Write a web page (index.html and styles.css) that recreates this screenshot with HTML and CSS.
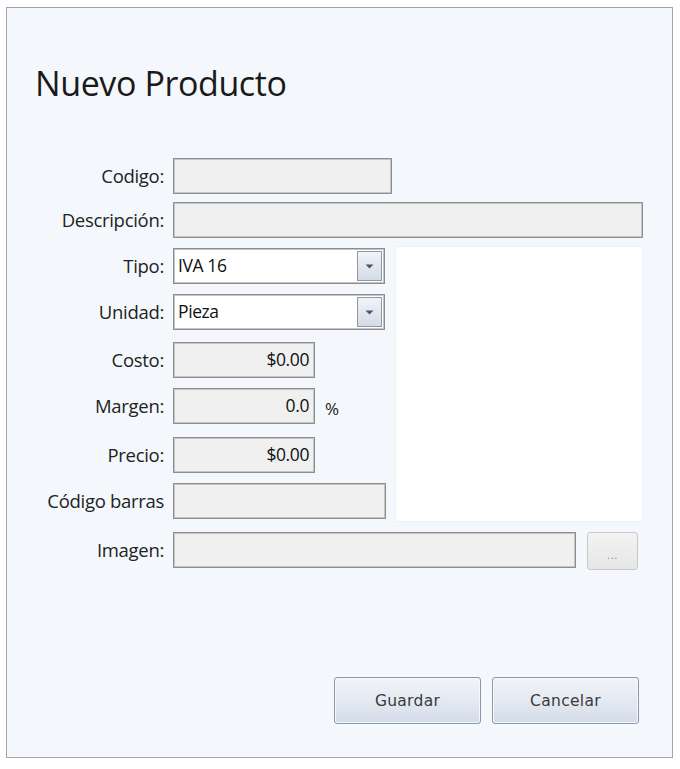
FILE: index.html
```html
<!DOCTYPE html>
<html lang="es">
<head>
<meta charset="utf-8">
<title>Nuevo Producto</title>
<link rel="stylesheet" href="styles.css">
</head>
<body>
<div class="dialog">
  <h1 class="title">Nuevo Producto</h1>
  <div class="form">
    <label class="lbl">Codigo:</label>
    <div class="field w-codigo"></div>

    <label class="lbl">Descripción:</label>
    <div class="field span-all"></div>

    <label class="lbl">Tipo:</label>
    <div class="select">
      <span class="select-text">IVA 16</span>
      <span class="drop"><svg width="9" height="5" viewBox="0 0 9 5"><path d="M0.5 0.5 H8.5 L4.5 4.5 Z" fill="#4a5566"/></svg></span>
    </div>
    <div class="panel"></div>

    <label class="lbl">Unidad:</label>
    <div class="select">
      <span class="select-text">Pieza</span>
      <span class="drop"><svg width="9" height="5" viewBox="0 0 9 5"><path d="M0.5 0.5 H8.5 L4.5 4.5 Z" fill="#4a5566"/></svg></span>
    </div>

    <label class="lbl">Costo:</label>
    <div class="field w-num num">$0.00</div>

    <label class="lbl">Margen:</label>
    <div class="num-row">
      <div class="field w-num num">0.0</div>
      <span class="pct">%</span>
    </div>

    <label class="lbl">Precio:</label>
    <div class="field w-num num">$0.00</div>

    <label class="lbl">Código barras</label>
    <div class="field w-barras"></div>

    <label class="lbl">Imagen:</label>
    <div class="img-row">
      <div class="field w-imagen"></div>
      <button class="dots-btn" type="button">...</button>
    </div>
  </div>
  <div class="actions">
    <button class="btn" type="button">Guardar</button>
    <button class="btn" type="button">Cancelar</button>
  </div>
</div>
</body>
</html>
```

FILE: styles.css
```css
html, body {
  margin: 0;
  padding: 0;
  background: #ffffff;
}

body {
  font-family: "Open Sans", "Noto Sans", "Liberation Sans", sans-serif;
  color: #1e1e1e;
}

.dialog {
  box-sizing: border-box;
  margin: 7px 0 0 6px;
  width: 667px;
  height: 751px;
  border: 1px solid #a2a4a6;
  background: #f4f8fc;
  padding: 0 23px 33px 23px;
  display: flex;
  flex-direction: column;
}

.title {
  margin: 58px 0 0 0;
  padding-left: 5px;
  font-size: 34px;
  line-height: 34px;
  font-weight: 400;
  color: #1a1a1a;
  letter-spacing: -0.4px;
}

.form {
  margin-top: 58px;
  display: grid;
  grid-template-columns: 143px 222px 248px;
  grid-template-rows: 44px 46px 46px 48px 46px 49px 46px 49px 38px;
  align-items: start;
}

.lbl {
  grid-column: 1;
  height: 36px;
  line-height: 36px;
  text-align: right;
  padding-right: 9px;
  font-size: 18.5px;
  letter-spacing: -0.3px;
  white-space: nowrap;
  color: #222;
}

.field {
  box-sizing: border-box;
  height: 36px;
  border: 1px solid #8e8e8e;
  box-shadow: inset 0 0 0 1px #c4c4c4;
  background: #f0f0f0;
  font-size: 17.5px;
  line-height: 33px;
  color: #111;
}

.w-codigo { width: 219px; }
.w-barras { width: 213px; }
.w-num { width: 142px; }
.w-imagen { width: 403px; }

.span-all {
  grid-column: 2 / 4;
  width: 470px;
}

.num {
  text-align: right;
  padding-right: 5px;
  letter-spacing: -0.4px;
}

.num-row {
  display: flex;
  align-items: center;
  gap: 10px;
}

.pct {
  font-size: 17px;
  color: #222;
  padding-top: 4px;
}

.select {
  box-sizing: border-box;
  width: 212px;
  height: 36px;
  border: 1px solid #8e8e8e;
  box-shadow: inset 0 0 0 1px #c4c4c4;
  background: #ffffff;
  display: flex;
  align-items: flex-start;
  padding: 2px 2px 0 0;
}

.select-text {
  flex: 1;
  padding-left: 4px;
  font-size: 17.5px;
  line-height: 28px;
  letter-spacing: -0.4px;
  color: #111;
}

.drop {
  box-sizing: border-box;
  width: 25px;
  height: 30px;
  border: 1px solid #8f99a6;
  background: linear-gradient(#f1f4f8, #d3dbe6);
  display: flex;
  align-items: center;
  justify-content: center;
}

.panel {
  grid-column: 3;
  grid-row: 3 / 9;
  align-self: stretch;
  margin: -2px 0 10px 0;
  background: #ffffff;
  border: 1px solid #eef2f7;
}

.img-row {
  grid-column: 2 / 4;
  display: flex;
  align-items: flex-start;
  gap: 11px;
}

.dots-btn {
  box-sizing: border-box;
  width: 51px;
  height: 38px;
  border: 1px solid #c6c8ca;
  border-radius: 3px;
  background: linear-gradient(#f3f3f3, #e6e6e6);
  color: #8a8a8a;
  font-family: "DejaVu Sans", sans-serif;
  font-size: 10px;
  padding: 8px 0 0 0;
  letter-spacing: 0.5px;
}

.actions {
  margin-top: auto;
  display: flex;
  justify-content: flex-end;
  gap: 11px;
  padding-right: 10px;
}

.btn {
  box-sizing: border-box;
  width: 147px;
  height: 47px;
  border: 1px solid #8c98a8;
  border-radius: 3px;
  background: linear-gradient(#f1f4f9 0%, #e4eaf2 50%, #d2dbe8 100%);
  box-shadow: inset 0 0 0 1px #f6f8fb;
  font-family: "DejaVu Sans", "Open Sans", sans-serif;
  font-size: 15.5px;
  color: #3a3a3a;
  letter-spacing: 0.3px;
}
```
